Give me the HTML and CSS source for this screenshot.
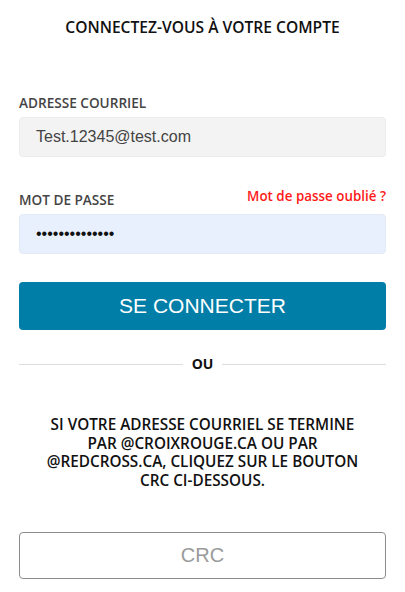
FILE: index.html
```html
<!DOCTYPE html>
<html lang="fr">
<head>
<meta charset="utf-8">
<title>Connexion</title>
<link rel="stylesheet" href="styles.css">
</head>
<body>
<main class="login">
  <h1 class="title">CONNECTEZ-VOUS À VOTRE COMPTE</h1>

  <form class="form">
    <div class="field field-email">
      <label class="label" for="email">ADRESSE COURRIEL</label>
      <input class="input input-email" id="email" type="text" value="Test.12345@test.com">
    </div>

    <div class="field field-password">
      <div class="label-row">
        <label class="label" for="password">MOT DE PASSE</label>
        <a class="forgot" href="#">Mot de passe oublié ?</a>
      </div>
      <input class="input input-password" id="password" type="password" value="12345678901234">
    </div>

    <button class="btn-primary" type="button">SE CONNECTER</button>
  </form>

  <div class="divider">
    <span class="divider-line"></span>
    <span class="divider-text">OU</span>
    <span class="divider-line"></span>
  </div>

  <p class="notice">SI VOTRE ADRESSE COURRIEL SE TERMINE<br>PAR @CROIXROUGE.CA OU PAR<br>@REDCROSS.CA, CLIQUEZ SUR LE BOUTON<br>CRC CI-DESSOUS.</p>

  <button class="btn-secondary" type="button">CRC</button>
</main>
</body>
</html>
```

FILE: styles.css
```css
html, body {
  margin: 0;
  padding: 0;
  background: #ffffff;
}

body {
  font-family: "Open Sans", "Noto Sans", sans-serif;
  color: #111111;
}

.login {
  padding: 0 19px;
  display: flex;
  flex-direction: column;
}

.title {
  margin: 17px 0 0;
  font-size: 15.6px;
  line-height: 21px;
  font-weight: 600;
  text-align: center;
  color: #111111;
}

.form {
  display: flex;
  flex-direction: column;
  margin: 0;
}

.field {
  display: flex;
  flex-direction: column;
}

.field-email {
  margin-top: 57px;
}

.field-password {
  margin-top: 31px;
}

.label-row {
  display: flex;
  justify-content: space-between;
  align-items: flex-start;
}

.label {
  font-size: 13.6px;
  line-height: 16px;
  font-weight: 600;
  color: #444444;
  margin-bottom: 6px;
}

.label-row .label {
  margin-top: 4px;
}

.forgot {
  font-size: 13.4px;
  line-height: 16px;
  font-weight: 600;
  color: #ff1a1a;
  text-decoration: none;
}

.input {
  box-sizing: border-box;
  width: 100%;
  height: 40px;
  margin: 0;
  padding: 0 16px;
  border: 1px solid #ececec;
  border-radius: 4px;
  font-family: "Liberation Sans", Arial, sans-serif;
  font-size: 16px;
  outline: none;
}

.input-email {
  background: #f3f3f3;
  color: #444444;
}

.input-password {
  background: #e8f0fe;
  color: #111111;
  border-color: #e3eaf6;
}

.btn-primary {
  box-sizing: border-box;
  width: 100%;
  height: 48px;
  margin-top: 28px;
  border: none;
  border-radius: 4px;
  background: #007ea7;
  color: #ffffff;
  font-family: "Liberation Sans", Arial, sans-serif;
  font-size: 21px;
  cursor: pointer;
}

.divider {
  display: flex;
  align-items: center;
  gap: 9px;
  height: 20px;
  margin-top: 24px;
}

.divider-line {
  flex: 1;
  height: 1px;
  background: #dddddd;
}

.divider-text {
  font-size: 14px;
  line-height: 20px;
  font-weight: 700;
  color: #111111;
}

.notice {
  margin: 41px 0 0;
  font-size: 15.3px;
  line-height: 18.5px;
  font-weight: 600;
  text-align: center;
  color: #111111;
}

.btn-secondary {
  box-sizing: border-box;
  width: 100%;
  height: 47px;
  margin-top: 43px;
  border: 1px solid #8c8c8c;
  border-radius: 4px;
  background: #ffffff;
  color: #9a9a9a;
  font-family: "Liberation Sans", Arial, sans-serif;
  font-size: 20px;
  cursor: pointer;
}
```
